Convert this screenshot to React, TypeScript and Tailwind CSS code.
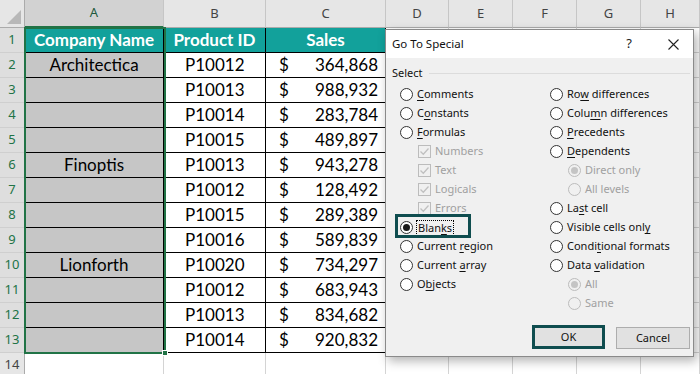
import React from 'react';

const COLS = ['A', 'B', 'C', 'D', 'E', 'F', 'G', 'H'];

const ROWS: [string, string, string][] = [
  ['Architectica', 'P10012', '364,868'],
  ['', 'P10013', '988,932'],
  ['', 'P10014', '283,784'],
  ['', 'P10015', '489,897'],
  ['Finoptis', 'P10013', '943,278'],
  ['', 'P10012', '128,492'],
  ['', 'P10015', '289,389'],
  ['', 'P10016', '589,839'],
  ['Lionforth', 'P10020', '734,297'],
  ['', 'P10012', '683,943'],
  ['', 'P10013', '834,682'],
  ['', 'P10014', '920,832'],
];

const cellFont = { fontFamily: 'Lato, "Liberation Sans", sans-serif' };
const uiFont = { fontFamily: '"Noto Sans", "Open Sans", sans-serif' };

// label with one underlined access key
function Key({ text, k }: { text: string; k?: number }) {
  if (k === undefined) return <span>{text}</span>;
  return (
    <span>
      {text.slice(0, k)}
      <span className="underline underline-offset-2">{text[k]}</span>
      {text.slice(k + 1)}
    </span>
  );
}

function Radio({ checked, disabled }: { checked?: boolean; disabled?: boolean }) {
  return (
    <span
      className={`w-[13px] h-[13px] rounded-full border flex items-center justify-center shrink-0 ${
        disabled ? 'border-[#bcbcbc] bg-[#f0f0f0]' : 'border-[#333333] bg-white'
      }`}
    >
      {checked && (
        <span className={`w-[7px] h-[7px] rounded-full ${disabled ? 'bg-[#c4c4c4]' : 'bg-[#1a1a1a]'}`} />
      )}
    </span>
  );
}

function Check() {
  return (
    <span className="w-[13px] h-[13px] border border-[#bcbcbc] bg-[#f0f0f0] flex items-center justify-center shrink-0">
      <svg width="11" height="11" viewBox="0 0 11 11">
        <path d="M1.5 5.5 L4.3 8.3 L9.5 2.5" fill="none" stroke="#c0c0c0" strokeWidth="1.3" />
      </svg>
    </span>
  );
}

type Opt = { label: string; k?: number; kind: 'radio' | 'sub' | 'check'; checked?: boolean; focus?: boolean };

const LEFT: Opt[] = [
  { label: 'Comments', k: 0, kind: 'radio' },
  { label: 'Constants', k: 1, kind: 'radio' },
  { label: 'Formulas', k: 0, kind: 'radio' },
  { label: 'Numbers', kind: 'check' },
  { label: 'Text', kind: 'check' },
  { label: 'Logicals', kind: 'check' },
  { label: 'Errors', kind: 'check' },
  { label: 'Blanks', k: 4, kind: 'radio', checked: true, focus: true },
  { label: 'Current region', k: 8, kind: 'radio' },
  { label: 'Current array', k: 8, kind: 'radio' },
  { label: 'Objects', k: 1, kind: 'radio' },
];

const RIGHT: Opt[] = [
  { label: 'Row differences', k: 2, kind: 'radio' },
  { label: 'Column differences', k: 4, kind: 'radio' },
  { label: 'Precedents', k: 0, kind: 'radio' },
  { label: 'Dependents', k: 0, kind: 'radio' },
  { label: 'Direct only', kind: 'sub', checked: true },
  { label: 'All levels', kind: 'sub' },
  { label: 'Last cell', k: 2, kind: 'radio' },
  { label: 'Visible cells only', k: 17, kind: 'radio' },
  { label: 'Conditional formats', k: 5, kind: 'radio' },
  { label: 'Data validation', k: 5, kind: 'radio' },
  { label: 'All', kind: 'sub', checked: true },
  { label: 'Same', kind: 'sub' },
];

function OptionRow({ o }: { o: Opt }) {
  const disabled = o.kind !== 'radio';
  return (
    <div className={`h-[19px] flex items-center gap-[4px] ${disabled ? 'pl-[18px] text-[#a0a0a0]' : 'text-[#111]'}`}>
      {o.kind === 'check' ? <Check /> : <Radio checked={o.checked} disabled={disabled} />}
      <span className={o.focus ? 'outline outline-1 outline-dotted outline-black px-[1px] leading-[14px]' : ''}>
        <Key text={o.label} k={o.k} />
      </span>
    </div>
  );
}

function GoToSpecial() {
  return (
    <div
      className="absolute left-[385px] top-[29px] w-[309px] h-[328px] border border-[#8a8a8a] bg-[#f0f0f0] flex flex-col shadow-[3px_4px_10px_rgba(0,0,0,0.3)] text-[11px]"
      style={uiFont}
    >
      {/* title bar */}
      <div className="h-[28px] bg-white flex items-center pl-[6px] pr-[14px] shrink-0">
        <span className="text-[11.5px] text-[#111]">Go To Special</span>
        <span className="ml-auto text-[13px] text-[#222] mr-[36px]">?</span>
        <svg width="11" height="11" viewBox="0 0 11 11">
          <path d="M0.5 0.5 L10.5 10.5 M10.5 0.5 L0.5 10.5" stroke="#222" strokeWidth="1.1" />
        </svg>
      </div>

      {/* body */}
      <div className="relative flex-1 flex flex-col pl-[6px] pt-[6px] pb-[7px]">
        <div className="h-[19px] flex items-center gap-[6px] text-[#111]">
          <span>Select</span>
          <span className="flex-1 h-px bg-[#dcdcdc] mr-[3px]" />
        </div>
        <div className="mt-[2px] grid grid-cols-[150px_1fr] pl-[8px]">
          <div className="flex flex-col">
            {LEFT.map(o => <OptionRow key={o.label} o={o} />)}
          </div>
          <div className="flex flex-col">
            {RIGHT.map(o => <OptionRow key={o.label} o={o} />)}
          </div>
        </div>

        {/* highlight around Blanks */}
        <div className="absolute left-[9px] top-[156px] w-[76px] h-[24px] border-[3px] border-[#0f4d4f]" />

        <div className="mt-auto flex items-end justify-end gap-[11px] pr-[3px]">
          <div className="w-[73px] h-[24px] border-[3px] border-[#0f4d4f] bg-[#e1e1e1] flex items-center justify-center text-[#111]">
            OK
          </div>
          <div className="w-[74px] h-[22px] border border-[#adadad] bg-[#e1e1e1] flex items-center justify-center text-[#111]">
            Cancel
          </div>
        </div>
      </div>
    </div>
  );
}

export default function App() {
  return (
    <div className="relative w-[700px] h-[374px] overflow-hidden bg-white select-none">
      <div className="grid grid-cols-[25px_139px_102px_120px_63px_64px_64px_64px_59px] grid-rows-[28px_repeat(14,25px)]">
        {/* corner */}
        <div className="bg-[#e6e6e6] border-r border-b border-[#ababab] relative">
          <svg className="absolute right-[3px] bottom-[3px]" width="14" height="14" viewBox="0 0 14 14">
            <path d="M14 0 L14 14 L0 14 Z" fill="#b8b8b8" />
          </svg>
        </div>
        {COLS.map(c => (
          <div
            key={c}
            className={`flex items-center justify-center text-[13px] border-r border-[#c6c6c6] ${
              c === 'A'
                ? 'bg-[#d2d2d2] text-[#1e5a3c] border-b-2 border-b-[#217346]'
                : 'bg-[#e6e6e6] text-[#444] border-b border-b-[#ababab]'
            }`}
            style={uiFont}
          >
            {c}
          </div>
        ))}

        {/* row 1: table headers */}
        <div className="bg-[#dedede] border-r border-[#ababab] border-b border-b-[#cfcfcf] flex items-center justify-center text-[13px] text-[#217346]" style={uiFont}>1</div>
        {['Company Name', 'Product ID', 'Sales'].map(h => (
          <div
            key={h}
            className="bg-[#12a19b] text-white font-bold text-[17px] border-r border-b border-black flex items-center justify-center"
            style={cellFont}
          >
            {h}
          </div>
        ))}
        {[0, 1, 2, 3, 4].map(i => (
          <div key={i} className="border-r border-b border-[#d4d4d4]" />
        ))}

        {ROWS.map((r, i) => (
          <React.Fragment key={i}>
            <div className="bg-[#dedede] border-r border-[#ababab] border-b border-b-[#cfcfcf] flex items-center justify-center text-[13px] text-[#217346]" style={uiFont}>
              {i + 2}
            </div>
            <div className="bg-[#c6c6c6] border-r border-b border-black flex items-center justify-center text-[17px] text-black" style={cellFont}>
              {r[0]}
            </div>
            <div className="border-r border-b border-black flex items-center pl-[21px] text-[17px] text-black" style={cellFont}>
              {r[1]}
            </div>
            <div className="border-r border-b border-black flex items-center justify-between pl-[13px] pr-[7px] text-[17px] text-black" style={cellFont}>
              <span>$</span>
              <span>{r[2]}</span>
            </div>
            {[0, 1, 2, 3, 4].map(j => (
              <div key={j} className="border-r border-b border-[#d4d4d4]" />
            ))}
          </React.Fragment>
        ))}

        {/* row 14 */}
        <div className="bg-[#e6e6e6] border-r border-[#ababab] border-b border-b-[#cfcfcf] flex items-center justify-center text-[13px] text-[#444]" style={uiFont}>14</div>
        {[0, 1, 2, 3, 4, 5, 6, 7].map(j => (
          <div key={j} className="border-r border-b border-[#d4d4d4]" />
        ))}
      </div>

      {/* selection of A1:A13 */}
      <div className="absolute left-[24px] top-[27px] w-[142px] h-[327px] border-2 border-[#217346] pointer-events-none">
        <div className="absolute -right-[4px] -bottom-[4px] w-[6px] h-[6px] bg-[#217346] border border-white" />
      </div>

      <GoToSpecial />
    </div>
  );
}
